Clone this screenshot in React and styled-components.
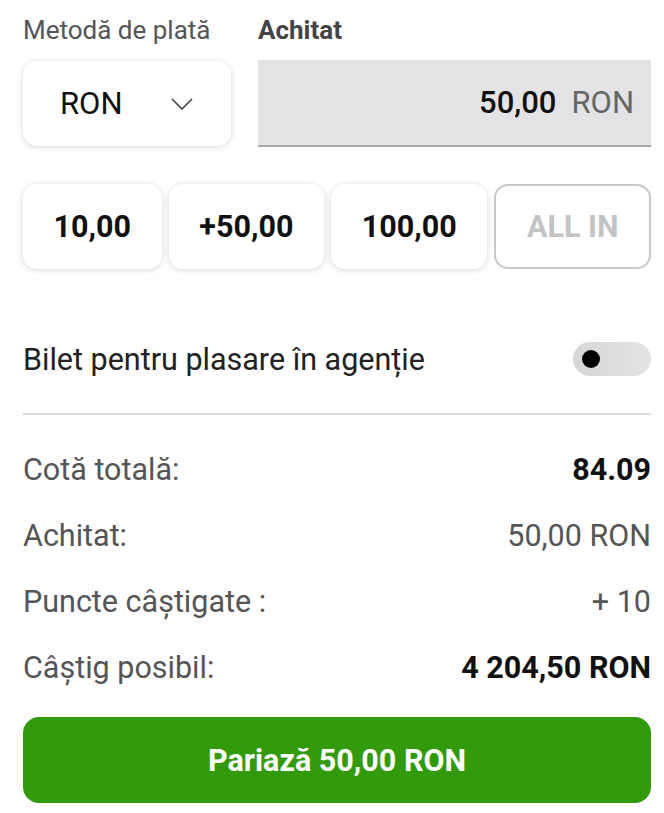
import React, { useState } from 'react';
import styled, { createGlobalStyle } from 'styled-components';

const Global = createGlobalStyle`
body {
  margin: 0;
  background: #fff;
  font-family: Roboto, "Liberation Sans", sans-serif;
}
* { box-sizing: border-box; }
`

const Page = styled.div`
width: 664px;
padding: 16px 13px 0 23px;
`

const Head = styled.div`
display: grid;
grid-template-columns: 208px 1fr;
column-gap: 27px;
row-gap: 16px;
align-items: end;
`

const Label = styled.div`
font-size: 26px;
line-height: 28px;
color: ${props => props.strong ? '#444' : '#555'};
font-weight: ${props => props.strong ? 700 : 400};
`

const Select = styled.div`
height: 85px;
margin-bottom: 1px;
border-radius: 14px;
background: #fff;
box-shadow: 0 1px 6px rgba(0,0,0,0.16);
display: flex;
align-items: center;
justify-content: space-between;
padding: 0 38px 0 37px;
font-size: 31px;
color: #111;
`

const Amount = styled.div`
height: 87px;
background: #e3e3e5;
border-bottom: 2px solid #a9a9ab;
display: flex;
align-items: center;
justify-content: flex-end;
gap: 15px;
padding-right: 17px;
font-size: 31px;
`

const Value = styled.span`
font-weight: 500;
color: #111;
`

const Currency = styled.span`
color: #666;
`

const Quick = styled.div`
display: flex;
gap: 7px;
margin-top: 37px;
`

const QuickButton = styled.button`
flex: 1 1 auto;
height: 85px;
border-radius: 14px;
font-family: inherit;
font-size: 30.5px;
font-weight: 700;
padding: 0;
cursor: pointer;
background: #fff;
color: ${props => props.muted ? '#c3c3c5' : '#111'};
border: ${props => props.muted ? '2px solid #c8c8ca' : '0'};
box-shadow: ${props => props.muted ? 'none' : '0 1px 6px rgba(0,0,0,0.16)'};
`

const ToggleRow = styled.div`
display: flex;
align-items: center;
justify-content: space-between;
margin-top: 73px;
height: 34px;
font-size: 30.5px;
color: #222;
`

const Track = styled.div`
width: 78px;
height: 34px;
border-radius: 17px;
background: linear-gradient(90deg, #d6d6d8, #e4e4e6);
position: relative;
cursor: pointer;
`

const Knob = styled.div`
position: absolute;
top: 8px;
left: ${props => props.on ? '51px' : '9px'};
width: 18px;
height: 18px;
border-radius: 50%;
background: #000;
`

const Divider = styled.div`
height: 2px;
background: #dcdcdc;
margin-top: 37px;
`

const Summary = styled.div`
padding-top: 21px;
`

const Row = styled.div`
display: flex;
justify-content: space-between;
align-items: center;
height: 66px;
font-size: 30.5px;
color: #555;
`

const RowValue = styled.span`
color: ${props => props.bold ? '#111' : '#555'};
font-weight: ${props => props.bold ? 700 : 400};
`

const Submit = styled.button`
display: block;
width: 100%;
height: 86px;
margin-top: 17px;
border: 0;
border-radius: 16px;
background: #339a0e;
color: #fff;
font-family: inherit;
font-size: 30.5px;
font-weight: 700;
cursor: pointer;
`

function Chevron() {
  return (
    <svg width="22" height="12" viewBox="0 0 22 12" fill="none">
      <path d="M1 1l10 10L21 1" stroke="#444" strokeWidth="1.6" />
    </svg>
  )
}

const rows = [
  { label: 'Cotă totală:', value: '84.09', bold: true },
  { label: 'Achitat:', value: '50,00 RON' },
  { label: 'Puncte câștigate :', value: '+ 10' },
  { label: 'Câștig posibil:', value: '4 204,50 RON', bold: true },
]

export default function App() {
  const [on, setOn] = useState(false);
  return (
    <Page>
      <Global />
      <Head>
        <Label>Metodă de plată</Label>
        <Label strong>Achitat</Label>
        <Select>
          RON
          <Chevron />
        </Select>
        <Amount>
          <Value>50,00</Value>
          <Currency>RON</Currency>
        </Amount>
      </Head>
      <Quick>
        <QuickButton>10,00</QuickButton>
        <QuickButton>+50,00</QuickButton>
        <QuickButton>100,00</QuickButton>
        <QuickButton muted>ALL IN</QuickButton>
      </Quick>
      <ToggleRow>
        Bilet pentru plasare în agenție
        <Track onClick={() => setOn(!on)}>
          <Knob on={on} />
        </Track>
      </ToggleRow>
      <Divider />
      <Summary>
        {rows.map(r => (
          <Row key={r.label}>
            {r.label}
            <RowValue bold={r.bold}>{r.value}</RowValue>
          </Row>
        ))}
      </Summary>
      <Submit>Pariază 50,00 RON</Submit>
    </Page>
  )
}
